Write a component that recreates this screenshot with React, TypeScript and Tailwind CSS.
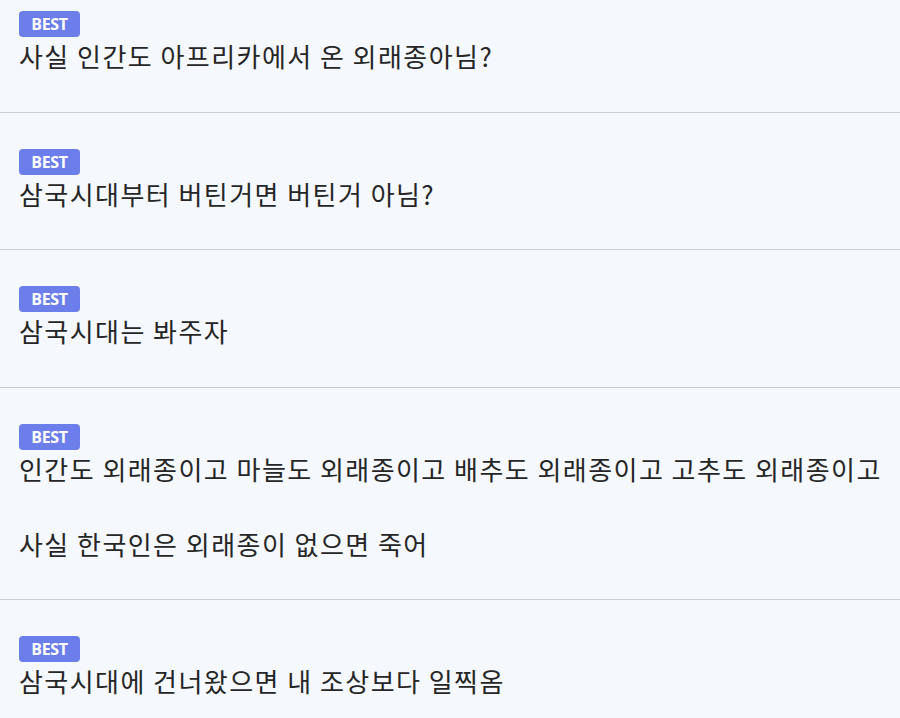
import React from 'react';

interface Comment {
  id: number;
  lines: string[];
}

const comments: Comment[] = [
  { id: 1, lines: ['사실 인간도 아프리카에서 온 외래종아님?'] },
  { id: 2, lines: ['삼국시대부터 버틴거면 버틴거 아님?'] },
  { id: 3, lines: ['삼국시대는 봐주자'] },
  {
    id: 4,
    lines: [
      '인간도 외래종이고 마늘도 외래종이고 배추도 외래종이고 고추도 외래종이고',
      '',
      '사실 한국인은 외래종이 없으면 죽어',
    ],
  },
  { id: 5, lines: ['삼국시대에 건너왔으면 내 조상보다 일찍옴'] },
];

const BestBadge: React.FC = () => (
  <span
    className="inline-flex h-[26px] w-[61px] items-center justify-center rounded-[4px] bg-[#6b7ee9] text-[16px] font-bold tracking-[-0.3px] text-white"
    style={{ fontFamily: '"Open Sans", "Noto Sans", sans-serif' }}
  >
    BEST
  </span>
);

export default function App() {
  return (
    <div className="h-[718px] w-full overflow-hidden bg-[#f5f8fd]">
      <ul className="-mt-[25px]">
        {comments.map((c) => (
          <li key={c.id} className="border-b border-[#c9ccd1] pl-[19px] pr-4 pt-[36px] pb-[37px]">
            <div className="flex">
              <BestBadge />
            </div>
            <div
              className="text-[26px] leading-[37.5px] tracking-[1.45px] text-[#262626]"
              style={{ fontFamily: '"Noto Sans CJK KR", "Noto Sans", sans-serif' }}
            >
              {c.lines.map((line, i) => (
                <p key={i} className="whitespace-nowrap">
                  {line === '' ? '\u00a0' : line}
                </p>
              ))}
            </div>
          </li>
        ))}
      </ul>
    </div>
  );
}
